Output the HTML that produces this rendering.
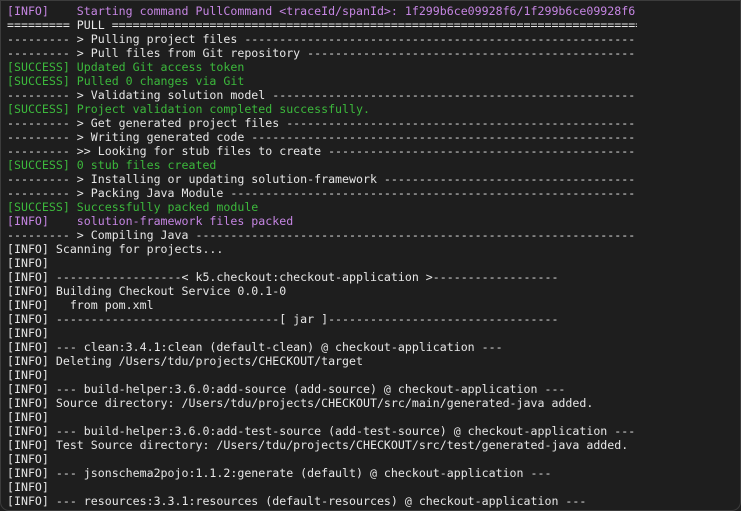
<!DOCTYPE html>
<html><head><meta charset="utf-8"><style>
html,body{margin:0;padding:0;background:#1e1e1e;}
.t{position:absolute;left:0;top:0;width:739px;height:509px;border:1px solid #3c3c3c;border-radius:0 0 9px 9px;background:#1e1e1e;overflow:hidden;}
pre{margin:0;position:absolute;left:6px;top:3px;font-family:"DejaVu Sans Mono","Liberation Mono",monospace;font-size:11.6px;line-height:14px;color:#e6e6e6;}
.l{display:block;width:630px;overflow:hidden;white-space:pre;height:14px;}
.p{color:#c585e2;}
.g{color:#3cb83c;}
</style></head><body><div class="t"><pre><span class="l p">[INFO]    Starting command PullCommand &lt;traceId/spanId&gt;: 1f299b6ce09928f6/1f299b6ce09928f6</span><span class="l">========= PULL ==========================================================================================</span><span class="l">--------- &gt; Pulling project files ----------------------------------------------------------------------------------</span><span class="l">--------- &gt; Pull files from Git repository ----------------------------------------------------------------------------------</span><span class="l g">[SUCCESS] Updated Git access token</span><span class="l g">[SUCCESS] Pulled 0 changes via Git</span><span class="l">--------- &gt; Validating solution model ----------------------------------------------------------------------------------</span><span class="l g">[SUCCESS] Project validation completed successfully.</span><span class="l">--------- &gt; Get generated project files ----------------------------------------------------------------------------------</span><span class="l">--------- &gt; Writing generated code ----------------------------------------------------------------------------------</span><span class="l">--------- &gt;&gt; Looking for stub files to create ----------------------------------------------------------------------------------</span><span class="l g">[SUCCESS] 0 stub files created</span><span class="l">--------- &gt; Installing or updating solution-framework ----------------------------------------------------------------------------------</span><span class="l">--------- &gt; Packing Java Module ----------------------------------------------------------------------------------</span><span class="l g">[SUCCESS] Successfully packed module</span><span class="l p">[INFO]    solution-framework files packed</span><span class="l">--------- &gt; Compiling Java ----------------------------------------------------------------------------------</span><span class="l">[INFO] Scanning for projects...</span><span class="l">[INFO]</span><span class="l">[INFO] ------------------&lt; k5.checkout:checkout-application &gt;------------------</span><span class="l">[INFO] Building Checkout Service 0.0.1-0</span><span class="l">[INFO]   from pom.xml</span><span class="l">[INFO] --------------------------------[ jar ]---------------------------------</span><span class="l">[INFO]</span><span class="l">[INFO] --- clean:3.4.1:clean (default-clean) @ checkout-application ---</span><span class="l">[INFO] Deleting /Users/tdu/projects/CHECKOUT/target</span><span class="l">[INFO]</span><span class="l">[INFO] --- build-helper:3.6.0:add-source (add-source) @ checkout-application ---</span><span class="l">[INFO] Source directory: /Users/tdu/projects/CHECKOUT/src/main/generated-java added.</span><span class="l">[INFO]</span><span class="l">[INFO] --- build-helper:3.6.0:add-test-source (add-test-source) @ checkout-application ---</span><span class="l">[INFO] Test Source directory: /Users/tdu/projects/CHECKOUT/src/test/generated-java added.</span><span class="l">[INFO]</span><span class="l">[INFO] --- jsonschema2pojo:1.1.2:generate (default) @ checkout-application ---</span><span class="l">[INFO]</span><span class="l">[INFO] --- resources:3.3.1:resources (default-resources) @ checkout-application ---</span></pre></div></body></html>
